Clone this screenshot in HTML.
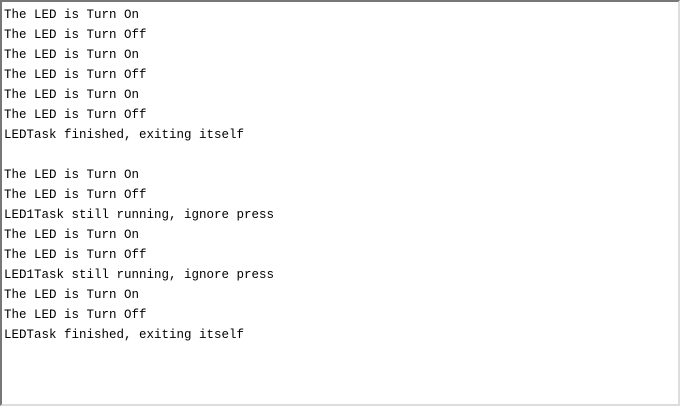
<!DOCTYPE html>
<html><head><style>
html,body{margin:0;padding:0;background:#fff;}
.box{position:absolute;left:0;top:0;width:676px;height:402px;border-top:2px solid #777;border-left:2px solid #777;border-right:2px solid #ddd;border-bottom:2px solid #ddd;background:#fff;overflow:hidden;}
pre{margin:0;position:absolute;left:2px;top:3px;font-family:"Liberation Mono",monospace;font-size:12.5px;line-height:20px;color:#000;}
</style></head><body><div class="box"><pre>The LED is Turn On
The LED is Turn Off
The LED is Turn On
The LED is Turn Off
The LED is Turn On
The LED is Turn Off
LEDTask finished, exiting itself

The LED is Turn On
The LED is Turn Off
LED1Task still running, ignore press
The LED is Turn On
The LED is Turn Off
LED1Task still running, ignore press
The LED is Turn On
The LED is Turn Off
LEDTask finished, exiting itself</pre></div></body></html>
